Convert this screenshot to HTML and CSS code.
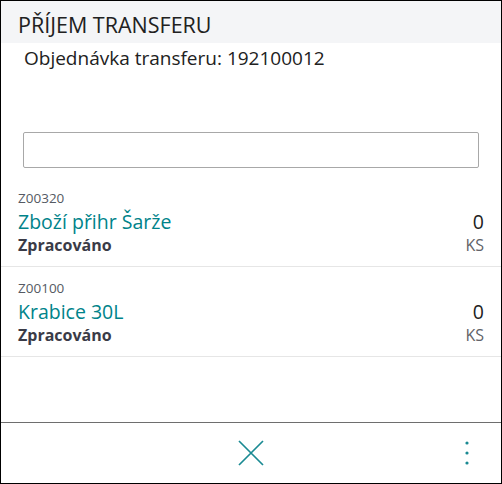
FILE: index.html
```html
<!DOCTYPE html>
<html lang="cs">
<head>
<meta charset="utf-8">
<link rel="stylesheet" href="styles.css">
</head>
<body>
<div class="app">
  <header class="header">PŘÍJEM TRANSFERU</header>
  <div class="order">Objednávka transferu: 192100012</div>
  <div class="search"><input class="search-input" type="text"></div>
  <main class="list">
    <div class="item">
      <div class="code">Z00320</div>
      <div class="row name-row"><span class="name">Zboží přihr Šarže</span><span class="qty">0</span></div>
      <div class="row status-row"><span class="status">Zpracováno</span><span class="unit">KS</span></div>
    </div>
    <div class="item">
      <div class="code">Z00100</div>
      <div class="row name-row"><span class="name">Krabice 30L</span><span class="qty">0</span></div>
      <div class="row status-row"><span class="status">Zpracováno</span><span class="unit">KS</span></div>
    </div>
  </main>
  <footer class="footer">
    <div class="footer-side"></div>
    <button class="icon-btn close-btn" aria-label="Zavřít">
      <svg width="26" height="26" viewBox="0 0 26 26"><path d="M1 1 L25 25 M25 1 L1 25" stroke="#1a8a93" stroke-width="1.7" fill="none"/></svg>
    </button>
    <div class="footer-side right">
      <button class="icon-btn more-btn" aria-label="Více">
        <svg width="4" height="24" viewBox="0 0 4 24"><circle cx="2" cy="2" r="1.6" fill="#1a8a93"/><circle cx="2" cy="12" r="1.6" fill="#1a8a93"/><circle cx="2" cy="22" r="1.6" fill="#1a8a93"/></svg>
      </button>
    </div>
  </footer>
</div>
</body>
</html>
```
FILE: styles.css
```css
html, body {
  margin: 0;
  padding: 0;
  background: #fff;
}
body {
  font-family: "Open Sans", "Noto Sans", sans-serif;
  color: #212121;
}
.app {
  width: 502px;
  height: 484px;
  box-sizing: border-box;
  border: 1px solid #000;
  display: flex;
  flex-direction: column;
  overflow: hidden;
}
.header {
  height: 42px;
  box-sizing: border-box;
  padding: 9px 0 3px 17px;
  font-size: 21.5px;
  line-height: 30px;
  background: #f4f5f7;
  color: #212121;
}
.order {
  padding: 3px 0 0 23px;
  font-size: 19px;
  line-height: 24px;
  color: #212121;
}
.search {
  margin: 62px 22px 0 22px;
}
.search-input {
  display: block;
  width: 100%;
  height: 36px;
  box-sizing: border-box;
  border: 1px solid #a8a8a8;
  border-radius: 2px;
  background: #fff;
  margin: 0;
  outline: none;
}
.list {
  flex: 1;
  margin-top: 9px;
}
.item {
  padding: 12px 17px 12px 17px;
  border-bottom: 1px solid #e6e6e6;
}
.code {
  font-size: 13.5px;
  line-height: 18px;
  color: #555a63;
}
.row {
  display: flex;
  justify-content: space-between;
  align-items: baseline;
}
.name-row {
  font-size: 19.5px;
  line-height: 30px;
}
.name {
  color: #00838a;
}
.qty {
  color: #212121;
}
.status-row {
  font-size: 16px;
  line-height: 17px;
}
.status {
  font-weight: 700;
  color: #3a3b47;
}
.unit {
  color: #5f6368;
}
.footer {
  height: 61px;
  box-sizing: border-box;
  border-top: 1px solid #6e6e6e;
  display: grid;
  grid-template-columns: 1fr auto 1fr;
  align-items: center;
}
.footer-side.right {
  display: flex;
  justify-content: flex-end;
  padding-right: 32px;
}
.icon-btn {
  border: none;
  background: none;
  padding: 0;
  margin: 0;
  display: flex;
  align-items: center;
  justify-content: center;
}
.close-btn svg, .more-btn svg {
  display: block;
}
```
